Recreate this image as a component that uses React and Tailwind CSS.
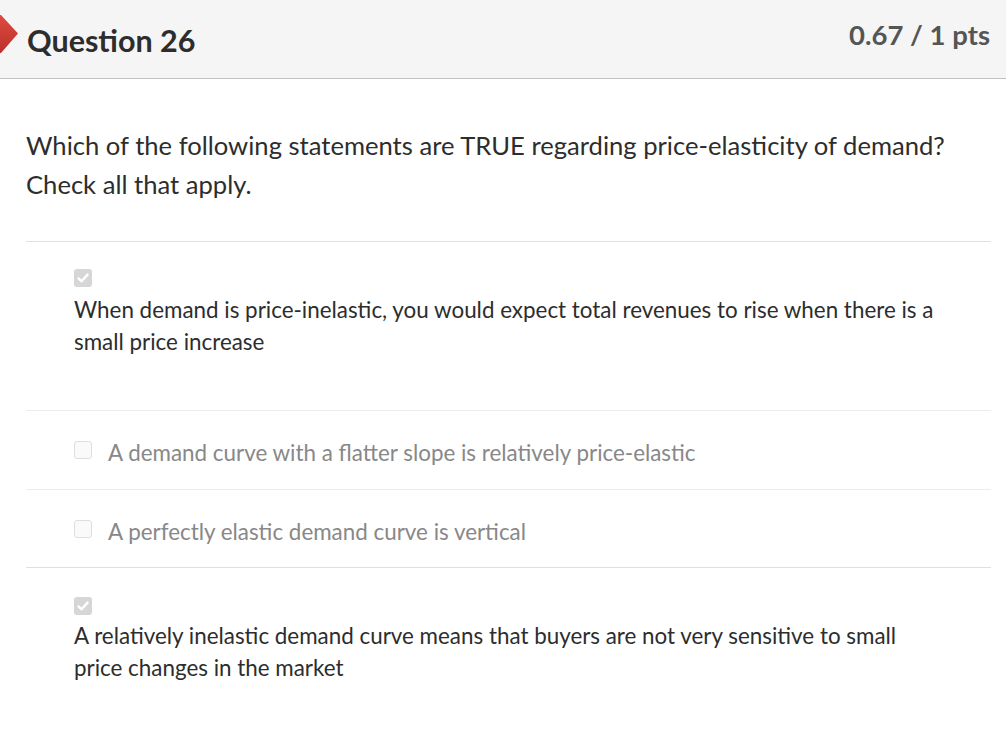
import React from "react";

function Checked() {
  return (
    <div className="w-[18px] h-[18px] rounded-[3px] bg-[#d6d6d6] flex items-center justify-center">
      <svg width="14" height="14" viewBox="0 0 14 14" fill="none">
        <path d="M2.5 7.4 L5.6 10.3 L11.6 3.6" stroke="#fff" strokeWidth="2.4" strokeLinecap="round" strokeLinejoin="round" />
      </svg>
    </div>
  );
}

function Unchecked() {
  return <div className="w-[18px] h-[18px] rounded-[3px] bg-[#fafafa] border border-[#dedede] shrink-0" />;
}

export default function App() {
  return (
    <div className="w-[1006px] h-[754px] bg-white overflow-hidden" style={{ fontFamily: "Lato, 'Open Sans', sans-serif" }}>
      <div className="relative h-[79px] bg-[#f5f5f5] border-b border-[#c2c2c2] flex items-center justify-between pl-[27px] pr-[16px]">
        <svg className="absolute left-0 top-[14px]" width="20" height="42" viewBox="0 0 20 42">
          <defs>
            <linearGradient id="g" x1="0" y1="0" x2="0" y2="1">
              <stop offset="0" stopColor="#e04a40" />
              <stop offset="1" stopColor="#b8322c" />
            </linearGradient>
          </defs>
          <polygon points="0,1 1,1 18,19.5 1,39 0,39" fill="url(#g)" />
        </svg>
        <div className="text-[30.5px] font-bold text-[#2d2d2d] pt-[4px]">Question 26</div>
        <div className="text-[27.5px] font-bold text-[#555] pb-[8px]">0.67 / 1 pts</div>
      </div>
      <div className="pl-[26px] pr-[15px]">
        <div className="pt-[47px] pb-[37px] text-[25.6px] leading-[39px] text-[#2d2d2d] whitespace-nowrap">
          Which of the following statements are TRUE regarding price-elasticity of demand?
          <br />
          Check all that apply.
        </div>
        <div className="border-t border-[#e0e0e0] pl-[48px] pt-[27px] pb-[52px]">
          <Checked />
          <div className="mt-[7px] text-[22.4px] leading-[32px] text-[#2d2d2d] whitespace-nowrap">
            When demand is price-inelastic, you would expect total revenues to rise when there is a
            <br />
            small price increase
          </div>
        </div>
        <div className="border-t border-[#ececec] pl-[48px] h-[79px] flex items-center gap-[16px]">
          <Unchecked />
          <div className="mt-[6px] text-[22.4px] text-[#888]">A demand curve with a flatter slope is relatively price-elastic</div>
        </div>
        <div className="border-t border-[#ececec] pl-[48px] h-[78px] flex items-center gap-[16px]">
          <Unchecked />
          <div className="mt-[6px] text-[22.4px] text-[#888]">A perfectly elastic demand curve is vertical</div>
        </div>
        <div className="border-t border-[#e0e0e0] pl-[48px] pt-[29px]">
          <Checked />
          <div className="mt-[5px] text-[22.4px] leading-[32px] text-[#2d2d2d] whitespace-nowrap">
            A relatively inelastic demand curve means that buyers are not very sensitive to small
            <br />
            price changes in the market
          </div>
        </div>
      </div>
    </div>
  );
}
